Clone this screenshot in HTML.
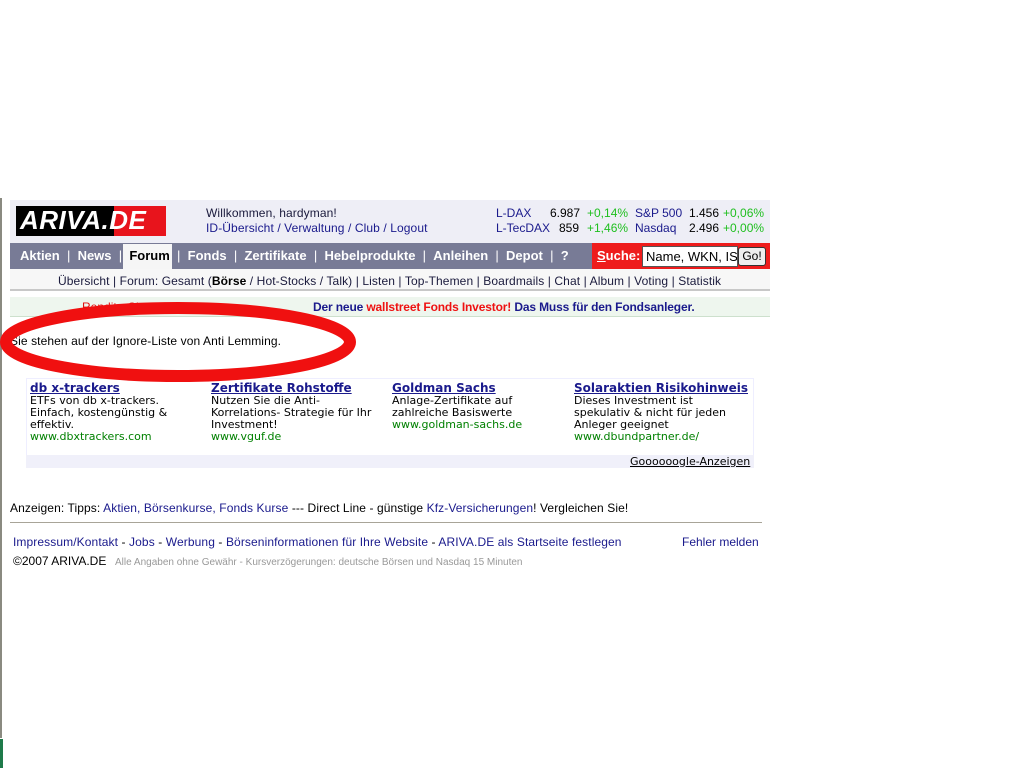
<!DOCTYPE html>
<html><head><meta charset="utf-8"><style>
*{margin:0;padding:0;box-sizing:border-box}
body{width:1024px;height:768px;background:#fff;position:relative;overflow:hidden;font-family:"Liberation Sans",Arial,sans-serif;font-size:12px;color:#000}
.a{position:absolute;white-space:nowrap}
.bl{color:#1a1a8c}
.gr{color:#1fbf1f}
.ls{letter-spacing:0.1px}
.v{font-family:"DejaVu Sans",Verdana,sans-serif;font-size:11px;line-height:12px}
.nav span{color:#fff;font-weight:bold;font-size:13px}
</style></head><body>
<div class="a" style="left:0;top:198px;width:2px;height:540px;background:#8a8a80"></div>
<div class="a" style="left:0;top:739px;width:3px;height:29px;background:#1e7a4a"></div>

<div class="a" style="left:10px;top:200px;width:760px;height:43px;background:#eeeef6"></div>
<div class="a" style="left:16px;top:206px;width:98px;height:30px;background:#000"></div>
<div class="a" style="left:114px;top:206px;width:52px;height:30px;background:#e8141c"></div>
<div class="a" style="left:20px;top:205px;font-size:26px;font-weight:bold;font-style:italic;color:#fff;letter-spacing:0.5px">ARIVA.DE</div>

<div class="a ls" style="left:206px;top:206px;color:#1a1a3c">Willkommen, hardyman!</div>
<div class="a bl ls" style="left:206px;top:221px">ID-Übersicht / Verwaltung / Club / Logout</div>
<div class="a bl" style="left:496px;top:206px">L-DAX</div>
<div class="a" style="left:550px;top:206px">6.987</div>
<div class="a gr" style="left:587px;top:206px">+0,14%</div>
<div class="a bl" style="left:635px;top:206px">S&amp;P 500</div>
<div class="a" style="left:689px;top:206px">1.456</div>
<div class="a gr" style="left:723px;top:206px">+0,06%</div>
<div class="a bl" style="left:496px;top:221px">L-TecDAX</div>
<div class="a" style="left:559px;top:221px">859</div>
<div class="a gr" style="left:587px;top:221px">+1,46%</div>
<div class="a bl" style="left:635px;top:221px">Nasdaq</div>
<div class="a" style="left:689px;top:221px">2.496</div>
<div class="a gr" style="left:723px;top:221px">+0,00%</div>

<div class="a" style="left:10px;top:243px;width:582px;height:26px;background:#787b96"></div>
<div class="a" style="left:123px;top:244px;width:49px;height:25px;background:#f6f6f6"></div>
<div class="a nav" style="left:20px;top:248px">
<span>Aktien</span><span style="font-weight:normal"> &nbsp;| &nbsp;</span><span>News</span><span style="font-weight:normal"> &nbsp;| &nbsp;</span><span style="color:#000">Forum</span><span style="font-weight:normal"> &nbsp;| &nbsp;</span><span>Fonds</span><span style="font-weight:normal"> &nbsp;| &nbsp;</span><span>Zertifikate</span><span style="font-weight:normal"> &nbsp;| &nbsp;</span><span>Hebelprodukte</span><span style="font-weight:normal"> &nbsp;| &nbsp;</span><span>Anleihen</span><span style="font-weight:normal"> &nbsp;| &nbsp;</span><span>Depot</span><span style="font-weight:normal"> &nbsp;| &nbsp;</span><span>?</span></div>
<div class="a" style="left:592px;top:243px;width:178px;height:26px;background:#ee1c1c"></div>
<div class="a" style="left:597px;top:248px;color:#fff;font-weight:bold;font-size:13px"><u>S</u>uche:</div>
<div class="a" style="left:642px;top:246px;width:96px;height:21px;background:#fff;border:1px solid #555;font-size:13px;padding:2px 3px;overflow:hidden">Name, WKN, ISIN</div>
<div class="a" style="left:738px;top:247px;width:28px;height:19px;background:#eee;border:1px solid #333;border-radius:3px;font-size:12px;text-align:center;line-height:17px">Go!</div>

<div class="a" style="left:10px;top:269px;width:760px;height:22px;background:#f7f7f7;border-bottom:2px solid #c8c8c8"></div>
<div class="a ls" style="left:58px;top:274px;color:#1a1a3c">Übersicht | Forum: Gesamt (<b style="color:#000">Börse</b> / Hot-Stocks / Talk) | Listen | Top-Themen | Boardmails | Chat | Album | Voting | Statistik</div>

<div class="a" style="left:10px;top:297px;width:760px;height:20px;background:#eef6ee;border-bottom:1px solid #cde0cd"></div>
<div class="a" style="left:82px;top:300px;color:#e01010">Rendite-Chancen ... </div>
<div class="a" style="left:313px;top:300px;font-weight:bold;color:#1a1a8c;letter-spacing:-0.15px">Der neue <span style="color:#ee1111">wallstreet Fonds Investor!</span> Das Muss für den Fondsanleger.</div>

<div class="a ls" style="left:10px;top:334px;color:#000">Sie stehen auf der Ignore-Liste von Anti Lemming.</div>

<div class="a" style="left:26px;top:378px;width:728px;height:90px;background:#fff;border:1px solid #eef"></div>
<div class="a" style="left:26px;top:455px;width:728px;height:13px;background:#f0f0fa"></div>
<div class="a v" style="left:30px;top:382px"><b style="color:#1a1a8c;text-decoration:underline;font-size:12px">db x-trackers</b><br>ETFs von db x-trackers.<br>Einfach, kostengünstig &amp;<br>effektiv.<br><span style="color:#008000">www.dbxtrackers.com</span></div>
<div class="a v" style="left:211px;top:382px"><b style="color:#1a1a8c;text-decoration:underline;font-size:12px">Zertifikate Rohstoffe</b><br>Nutzen Sie die Anti-<br>Korrelations- Strategie für Ihr<br>Investment!<br><span style="color:#008000">www.vguf.de</span></div>
<div class="a v" style="left:392px;top:382px"><b style="color:#1a1a8c;text-decoration:underline;font-size:12px">Goldman Sachs</b><br>Anlage-Zertifikate auf<br>zahlreiche Basiswerte<br><span style="color:#008000">www.goldman-sachs.de</span></div>
<div class="a v" style="left:574px;top:382px"><b style="color:#1a1a8c;text-decoration:underline;font-size:12px">Solaraktien Risikohinweis</b><br>Dieses Investment ist<br>spekulativ &amp; nicht für jeden<br>Anleger geeignet<br><span style="color:#008000">www.dbundpartner.de/</span></div>
<div class="a v" style="left:630px;top:456px;text-decoration:underline">Goooooogle-Anzeigen</div>

<svg class="a" style="left:0;top:290px" width="370" height="105"><ellipse cx="178" cy="52" rx="172" ry="34" fill="none" stroke="#f01010" stroke-width="12"/></svg>

<div class="a ls" style="left:10px;top:501px">Anzeigen: Tipps: <span class="bl">Aktien, Börsenkurse, Fonds Kurse</span> --- Direct Line - günstige <span class="bl">Kfz-Versicherungen</span>! Vergleichen Sie!</div>
<div class="a" style="left:10px;top:522px;width:752px;height:1px;background:#a8a498"></div>
<div class="a bl ls" style="left:13px;top:535px">Impressum/Kontakt <span style="color:#000">-</span> Jobs <span style="color:#000">-</span> Werbung <span style="color:#000">-</span> Börseninformationen für Ihre Website <span style="color:#000">-</span> ARIVA.DE als Startseite festlegen</div>
<div class="a bl" style="left:682px;top:535px">Fehler melden</div>
<div class="a" style="left:13px;top:554px">©2007 ARIVA.DE</div>
<div class="a" style="left:115px;top:557px;font-size:10px;color:#999">Alle Angaben ohne Gewähr - Kursverzögerungen: deutsche Börsen und Nasdaq 15 Minuten</div>
</body></html>
